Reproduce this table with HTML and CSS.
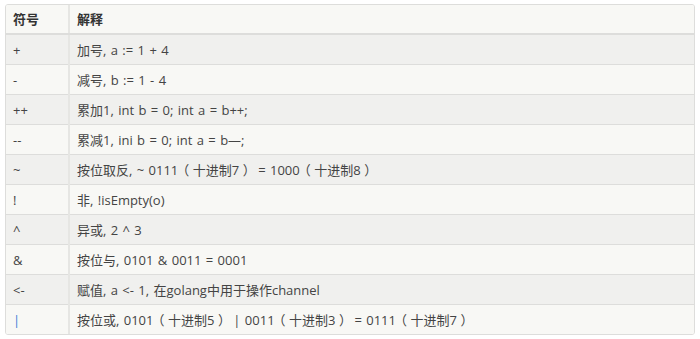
FILE: index.html
```html
<!DOCTYPE html>
<html>
<head>
<meta charset="utf-8">
<link rel="stylesheet" href="styles.css">
</head>
<body>
<div class="wrap">
<table class="ops">
<thead>
<tr><th class="c1">符号</th><th>解释</th></tr>
</thead>
<tbody>
<tr class="odd"><td class="c1">+</td><td>加号, a := 1 + 4</td></tr>
<tr><td class="c1">-</td><td>减号, b := 1 - 4</td></tr>
<tr class="odd"><td class="c1">++</td><td>累加1, int b = 0; int a = b++;</td></tr>
<tr><td class="c1">--</td><td>累减1, ini b = 0; int a = b—;</td></tr>
<tr class="odd"><td class="c1">~</td><td>按位取反, ~ 0111<span class="pn">（</span>十进制7<span class="pn">）</span> = 1000<span class="pn">（</span>十进制8<span class="pn">）</span></td></tr>
<tr><td class="c1">!</td><td>非, !isEmpty(o)</td></tr>
<tr class="odd"><td class="c1">^</td><td>异或, 2 ^ 3</td></tr>
<tr><td class="c1">&amp;</td><td>按位与, 0101 &amp; 0011 = 0001</td></tr>
<tr class="odd"><td class="c1">&lt;-</td><td>赋值, a &lt;- 1, 在golang中用于操作channel</td></tr>
<tr><td class="c1"><span class="bar">|</span></td><td>按位或, 0101<span class="pn">（</span>十进制5<span class="pn">）</span> | 0011<span class="pn">（</span>十进制3<span class="pn">）</span> = 0111<span class="pn">（</span>十进制7<span class="pn">）</span></td></tr>
</tbody>
</table>
</div>
</body>
</html>
```
FILE: styles.css
```css
html, body {
  margin: 0;
  background: #ffffff;
}
body {
  padding: 4px 4px 0 5px;
  font-family: "Open Sans", "Noto Sans CJK SC", sans-serif;
  font-size: 13px;
  word-spacing: 1px;
  color: #444;
}
.wrap {
  border: 1px solid #dddddb;
  border-radius: 3px;
  overflow: hidden;
  width: 690px;
  box-sizing: border-box;
}
.ops {
  width: 100%;
  border-collapse: collapse;
}
.ops th, .ops td {
  height: 29px;
  padding: 0 7px;
  text-align: left;
  border-top: 1px solid #dddddb;
  border-left: 2px solid #e6e6e3;
  background: #f8f8f5;
  white-space: nowrap;
  line-height: 18px;
}
.ops th {
  border-top: none;
  font-weight: bold;
  color: #333;
  border-bottom: 2px solid #dddddb;
  height: 28px;
}
.ops .c1 {
  width: 48px;
  border-left: none;
}
.ops tr.odd td {
  background: #f0f0ee;
}
.pn {
  font-family: "Noto Sans CJK SC", sans-serif;
  font-feature-settings: "palt";
  padding: 0 4px;
}
.bar {
  color: #3a7bd5;
}
```
